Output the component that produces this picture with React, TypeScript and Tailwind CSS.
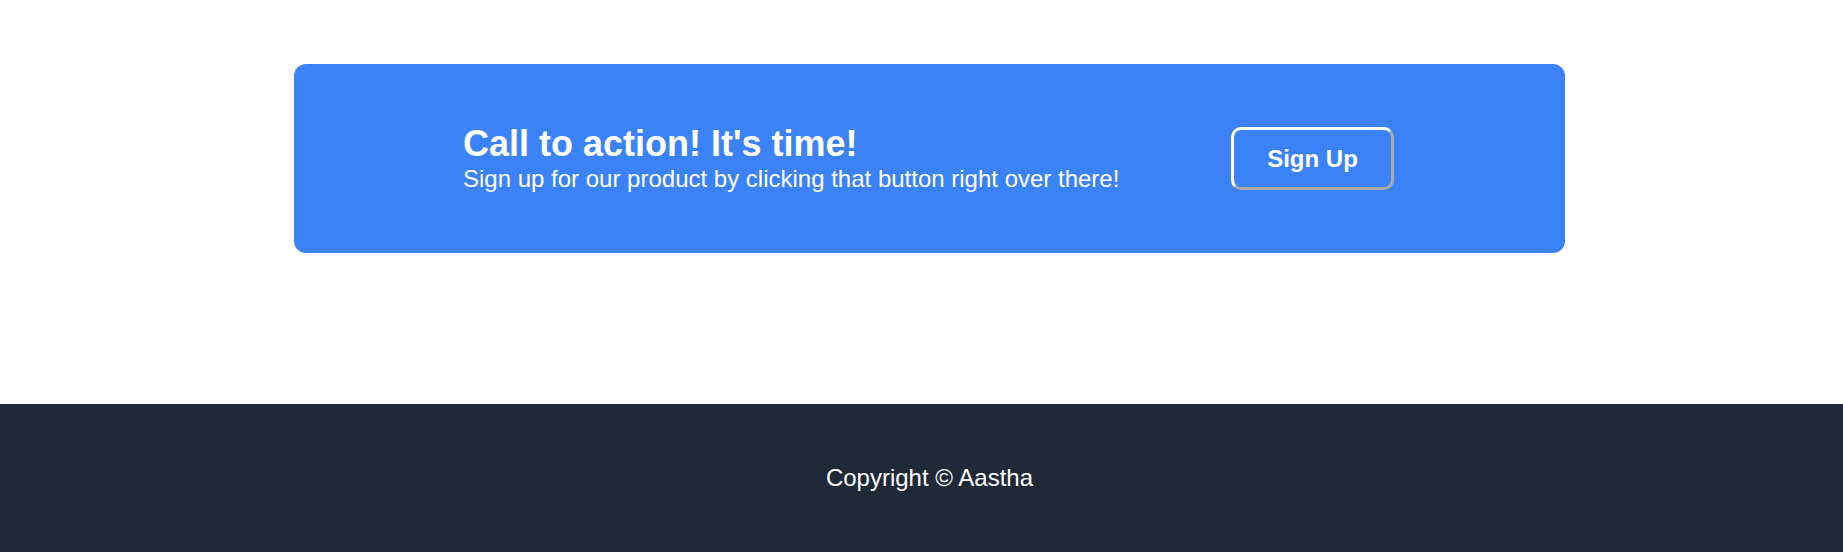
export default function App() {
  return (
    <div className="min-h-[560px] bg-white font-['Liberation_Sans',Arial,sans-serif] text-white">
      <main className="pl-4 pt-16 pb-[151px]">
        <section className="mx-auto flex h-[189px] w-[1271px] items-center justify-between rounded-xl bg-[#3b82f6] pl-[169px] pr-[171px]">
          <div className="pt-[2px]">
            <h2 className="text-4xl leading-[38px] font-bold">Call to action! It's time!</h2>
            <p className="text-2xl">Sign up for our product by clicking that button right over there!</p>
          </div>
          <button className="h-[63px] w-[163px] rounded-[10px] border-[3px] border-t-white border-l-white border-r-[#aaaaaa] border-b-[#aaaaaa] text-2xl font-bold">
            Sign Up
          </button>
        </section>
      </main>
      <footer className="flex h-[148px] items-center justify-center bg-[#1f2937] pl-4">
        <p className="text-2xl">Copyright © Aastha</p>
      </footer>
    </div>
  )
}
